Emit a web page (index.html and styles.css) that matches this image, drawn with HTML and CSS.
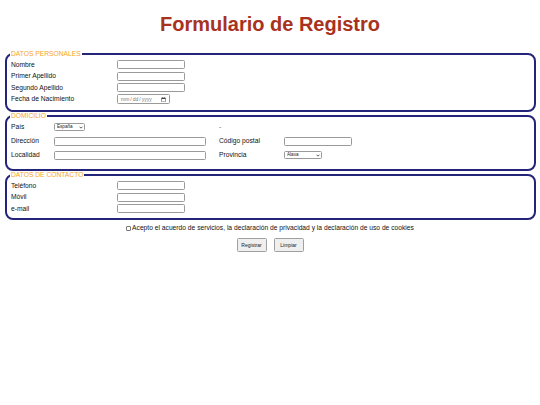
FILE: index.html
```html
<!DOCTYPE html>
<html lang="es">
<head>
<meta charset="utf-8">
<title>Formulario de Registro</title>
<link rel="stylesheet" href="styles.css">
</head>
<body>
<h1 class="title">Formulario de Registro</h1>
<form class="form">
  <fieldset class="box">
    <legend class="legend">DATOS PERSONALES</legend>
    <div class="grid grid-personal">
      <label class="lbl">Nombre</label><input class="txt" type="text">
      <label class="lbl">Primer Apellido</label><input class="txt" type="text">
      <label class="lbl">Segundo Apellido</label><input class="txt" type="text">
      <label class="lbl">Fecha de Nacimiento</label><input class="date" type="date">
    </div>
  </fieldset>
  <fieldset class="box box-dom">
    <legend class="legend">DOMICILIO</legend>
    <div class="grid grid-dom">
      <label class="lbl">País</label>
      <div class="sel-wrap sel-pais">
        <select class="sel"><option>España</option></select>
        <svg class="chev" viewBox="0 0 6 4" width="4" height="3"><path d="M0.8 0.8 L3 3 L5.2 0.8" fill="none" stroke="#222" stroke-width="1.1"/></svg>
      </div>
      <span class="lbl dash">-</span>
      <span></span>
      <label class="lbl">Dirección</label><input class="txt txt-long" type="text">
      <label class="lbl">Código postal</label><input class="txt" type="text">
      <label class="lbl">Localidad</label><input class="txt txt-long" type="text">
      <label class="lbl">Provincia</label>
      <div class="sel-wrap sel-prov">
        <select class="sel"><option>Álava</option></select>
        <svg class="chev" viewBox="0 0 6 4" width="4" height="3"><path d="M0.8 0.8 L3 3 L5.2 0.8" fill="none" stroke="#222" stroke-width="1.1"/></svg>
      </div>
    </div>
  </fieldset>
  <fieldset class="box box-contact">
    <legend class="legend">DATOS DE CONTACTO</legend>
    <div class="grid grid-personal">
      <label class="lbl">Teléfono</label><input class="txt" type="text">
      <label class="lbl">Móvil</label><input class="txt" type="text">
      <label class="lbl">e-mail</label><input class="txt" type="text">
    </div>
  </fieldset>
  <div class="accept">
    <input class="chk" type="checkbox"><span>Acepto el acuerdo de servicios, la declaración de privacidad y la declaración de uso de cookies</span>
  </div>
  <div class="buttons">
    <button class="btn" type="button">Registrar</button>
    <button class="btn" type="button">Limpiar</button>
  </div>
</form>
</body>
</html>
```

FILE: styles.css
```css
html, body {
  margin: 0;
  padding: 0;
  background: #ffffff;
}
body {
  font-family: "Liberation Sans", Arial, sans-serif;
  font-size: 6.7px;
  color: #111111;
}
.title {
  margin: 0;
  padding-top: 12px;
  height: 38px;
  box-sizing: border-box;
  font-size: 20px;
  line-height: 24px;
  font-weight: bold;
  color: #a9321e;
  text-align: center;
}
.form {
  padding-top: 12px;
}
.box {
  margin: 0 4px 0 5px;
  padding: 1px 4px 5px 4px;
  border: 2px solid #24247a;
  border-radius: 8px;
  min-width: 0;
}
.box-dom {
  padding-top: 0;
  padding-bottom: 7px;
}
.box-contact {
  padding-bottom: 3px;
}
.legend {
  padding: 0 1px;
  margin-left: -1px;
  color: #f5a623;
  font-size: 6.7px;
  line-height: 8px;
}
.grid {
  display: grid;
  align-items: center;
}
.grid-personal {
  grid-template-columns: 106px 68px;
  grid-auto-rows: 11.5px;
}
.grid-dom {
  grid-template-columns: 43px 165px 65px 70px;
  grid-auto-rows: 14px;
}
.lbl {
  line-height: 8px;
}
.dash {
  color: #666;
}
.txt {
  box-sizing: border-box;
  width: 68px;
  height: 9px;
  margin: 0;
  padding: 0 2px;
  border: 1px solid #9a9a9a;
  border-radius: 1.5px;
  font-size: 5px;
  background: #fff;
}
.txt-long {
  width: 152px;
}
.date {
  box-sizing: border-box;
  width: 53px;
  height: 10px;
  margin: 0;
  padding: 0 1px 0 2px;
  border: 1px solid #9a9a9a;
  border-radius: 1.5px;
  font-family: "Liberation Sans", Arial, sans-serif;
  font-size: 5px;
  color: #777;
  background: #fff;
}
.sel-wrap {
  position: relative;
  height: 8px;
}
.sel-pais {
  width: 31px;
}
.sel-prov {
  width: 38px;
}
.sel {
  -webkit-appearance: none;
  appearance: none;
  box-sizing: border-box;
  width: 100%;
  height: 8px;
  margin: 0;
  padding: 0 5px 0 2px;
  border: 1px solid #9a9a9a;
  border-radius: 1.5px;
  font-family: "Liberation Sans", Arial, sans-serif;
  font-size: 4.6px;
  line-height: 6px;
  color: #222;
  background: #fff;
  display: block;
}
.chev {
  position: absolute;
  right: 2px;
  top: 2.5px;
  pointer-events: none;
}
.accept {
  display: flex;
  justify-content: center;
  align-items: center;
  margin-top: 4px;
  height: 9px;
  line-height: 8px;
}
.chk {
  -webkit-appearance: none;
  appearance: none;
  box-sizing: border-box;
  width: 5px;
  height: 5px;
  margin: 0 1px 0 0;
  border: 0.7px solid #777;
  border-radius: 1px;
  background: #fff;
}
.buttons {
  display: flex;
  justify-content: center;
  gap: 7px;
  margin-top: 5px;
}
.btn {
  box-sizing: border-box;
  width: 30px;
  height: 14px;
  padding: 0;
  border: 1px solid #a0a0a0;
  border-radius: 1.5px;
  background: #efefef;
  font-family: "Liberation Sans", Arial, sans-serif;
  font-size: 5px;
  color: #222;
}
```
